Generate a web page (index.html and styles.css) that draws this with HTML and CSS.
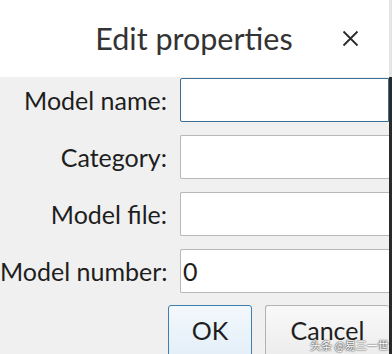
FILE: index.html
```html
<!DOCTYPE html>
<html>
<head>
<meta charset="utf-8">
<link rel="stylesheet" href="styles.css">
</head>
<body>
<div class="dialog">
  <div class="header">
    <div class="title">Edit properties</div>
    <div class="close">
      <svg width="17" height="17" viewBox="0 0 17 17"><path d="M1.5 1.5 L15.5 15.5 M15.5 1.5 L1.5 15.5" stroke="#2b2b2b" stroke-width="1.8" fill="none"/></svg>
    </div>
  </div>
  <div class="body">
    <div class="form">
      <label class="label">Model name:</label>
      <div class="input focused"></div>
      <label class="label">Category:</label>
      <div class="input"></div>
      <label class="label">Model file:</label>
      <div class="input"></div>
      <label class="label">Model number:</label>
      <div class="input">0</div>
    </div>
    <div class="buttons">
      <div class="btn ok">OK</div>
      <div class="btn cancel">Cancel</div>
    </div>
    <div class="watermark">头条 @易三一世</div>
  </div>
</div>
</body>
</html>
```
FILE: styles.css
```css
html, body {
  margin: 0;
  padding: 0;
}
body {
  width: 392px;
  height: 354px;
  overflow: hidden;
  background: #f0f0f0;
  font-family: "Lato", "Noto Sans", sans-serif;
  color: #222;
}
.dialog {
  width: 392px;
  height: 354px;
  display: flex;
  flex-direction: column;
  box-sizing: border-box;
}
.header {
  height: 77px;
  flex: none;
  background: #fff;
  position: relative;
  display: flex;
  align-items: center;
  justify-content: center;
  box-sizing: border-box;
  border-right: 3px solid #e4e4e4;
}
.title {
  font-size: 30.5px;
  color: #333;
  margin-top: -2px;
  margin-left: -1px;
}
.close {
  position: absolute;
  left: 342px;
  top: 30px;
  width: 17px;
  height: 17px;
}
.body {
  flex: 1;
  position: relative;
  padding-top: 1px;
  box-sizing: border-box;
  border-right: 3px solid #2a2a2a;
  border-bottom: 2px solid #2a2a2a;
}
.form {
  display: grid;
  grid-template-columns: 167px 1fr;
  column-gap: 13px;
  row-gap: 13px;
  align-items: center;
}
.label {
  text-align: right;
  font-size: 25px;
  white-space: nowrap;
  color: #1e1e1e;
}
.input {
  height: 44px;
  box-sizing: border-box;
  background: #fff;
  border: 1px solid #b8b8b8;
  border-right: none;
  border-radius: 2px 0 0 2px;
  font-size: 25px;
  line-height: 42px;
  padding-left: 2px;
  color: #1e1e1e;
}
.input.focused {
  border: 1px solid #3a6f98;
}
.buttons {
  display: flex;
  gap: 13px;
  margin-top: 12px;
  margin-left: 168px;
}
.btn {
  height: 56px;
  box-sizing: border-box;
  font-size: 25px;
  text-align: center;
  line-height: 48px;
  border-radius: 3px;
  color: #1e1e1e;
}
.ok {
  width: 84px;
  border: 1px solid #3c7fb1;
  background: linear-gradient(#f3f8fc, #e2eef8);
}
.cancel {
  flex: 1;
  border: 1px solid #b3b3b3;
  border-right: none;
  background: linear-gradient(#f9f9f9, #ebebeb);
}
.watermark {
  position: absolute;
  left: 310px;
  bottom: 9px;
  font-size: 11px;
  line-height: 14px;
  font-family: "Noto Sans CJK SC", sans-serif;
  color: #fff;
  text-shadow: 0 0 2px #333, 0 0 1px #333;
  white-space: nowrap;
}
```
